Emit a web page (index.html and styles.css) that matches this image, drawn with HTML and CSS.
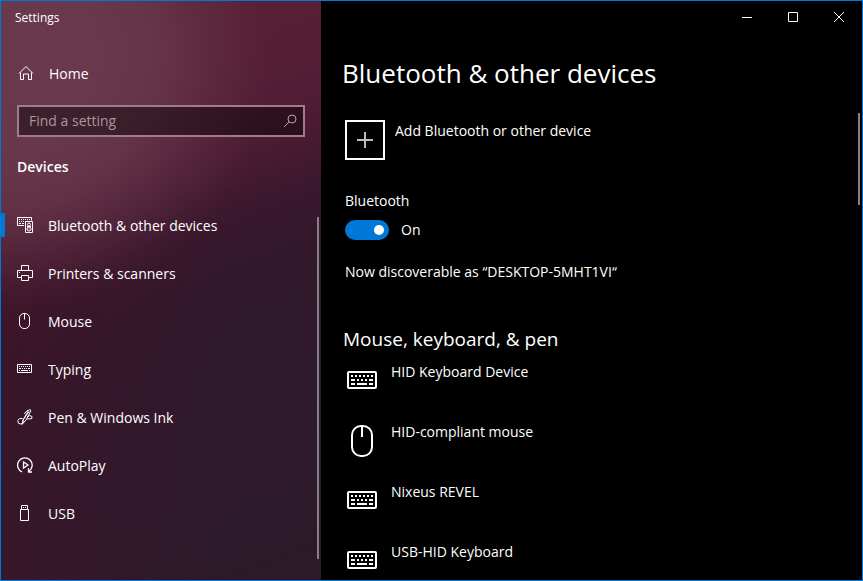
FILE: index.html
```html
<!DOCTYPE html>
<html lang="en">
<head>
<meta charset="utf-8">
<meta name="viewport" content="width=device-width, initial-scale=1">
<title>Settings</title>
<link rel="stylesheet" href="styles.css">
</head>
<body>
<svg class="symbols" aria-hidden="true">
  <symbol id="keyboard" viewBox="0 0 30 18">
    <rect x="1" y="1" width="28" height="16" rx="1" fill="none" stroke="currentColor" stroke-width="2"/>
    <path d="M4 5h2M8 5h2M12 5h2M16 5h2M20 5h2M24 5h2M4 9h4M10 9h2M14 9h2M18 9h2M22 9h4M4 13h4M10 13h10M22 13h4" fill="none" stroke="currentColor" stroke-width="2"/>
  </symbol>
</svg>
<div class="window">
  <aside class="sidebar">
    <div class="caption">Settings</div>
    <a class="home" href="#">
      <svg class="icon" viewBox="0 0 16 16"><path d="M1 8.500 8 1.500l7 7M2.500 7.500v7h3v-5.500h5v5.500h3v-7"/></svg>
      <span>Home</span>
    </a>
    <form class="search">
      <input class="search-input" type="text" placeholder="Find a setting" aria-label="Find a setting">
      <button class="search-button" type="button" aria-label="Search">
        <svg class="icon" viewBox="0 0 16 16"><circle cx="10" cy="6" r="4"/><path d="M7 9 2 14"/></svg>
      </button>
    </form>
    <h2 class="category">Devices</h2>
    <nav class="nav">
      <a class="nav-item selected" href="#">
        <svg class="icon" viewBox="0 0 16 16"><path d="M7 8.500H.500v-8h14v3M2 2.500h1M4 2.500h1M6 2.500h1M8 2.500h1M10 2.500h1M12 2.500h1M2 4.500h1M4 4.500h1M6 4.500h1M2 6.500h2M5 6.500h2M8.500 4.500h7v11h-7z"/><circle cx="12" cy="7.500" r="1.500"/><circle cx="12" cy="12" r="2"/><path d="M10 9.500h4M11.500 12h1"/></svg>
        <span>Bluetooth &amp; other devices</span>
      </a>
      <a class="nav-item" href="#">
        <svg class="icon" viewBox="0 0 16 16"><path d="M4.500 5V.500h7V5M4 12.500H.500v-7h15v7H12M4.500 10.500h7v5h-7zM2 7.500h1"/></svg>
        <span>Printers &amp; scanners</span>
      </a>
      <a class="nav-item" href="#">
        <svg class="icon" viewBox="0 0 16 16"><rect x="2.500" y=".5" width="10" height="15" rx="4.500"/><path d="M7.500 1v5.500"/></svg>
        <span>Mouse</span>
      </a>
      <a class="nav-item" href="#">
        <svg class="icon" viewBox="0 0 16 16"><path d="M.5 3.500h14v8H.500zM2 5.500h1M4 5.500h1M6 5.500h1M8 5.500h1M10 5.500h1M12 5.500h1M2 7.500h2M5 7.500h1M7 7.500h1M9 7.500h1M11 7.500h2M2 9.500h1M4 9.500h7M12 9.500h1"/></svg>
        <span>Typing</span>
      </a>
      <a class="nav-item" href="#">
        <svg class="icon" viewBox="0 0 16 16"><path d="M5 15.500 6 11 11.500 1.500q1.500-2 2.500 0L9 11zM6 11 12 2.500M11 .800 7 5M5.500 9.500Q2 8.500.800 11.500q-.5 3.500 3 3.500 2.500-.5 2.700-3.500M10 8.500q3-3.500 5-1 .8 2.500-2 2.500-2-.5-3 0"/></svg>
        <span>Pen &amp; Windows Ink</span>
      </a>
      <a class="nav-item" href="#">
        <svg class="icon icon-strong" viewBox="0 0 16 16"><path d="M5 14.900A7.300 7.300 0 1 1 12 14.200M11.500 11v4H15M6.500 5v6l4.500-3z"/></svg>
        <span>AutoPlay</span>
      </a>
      <a class="nav-item" href="#">
        <svg class="icon" viewBox="0 0 16 16"><path d="M3.500 4.500h8v11h-8zM4.500 4V.500h6V4M6 2.500h1M8 2.500h1"/></svg>
        <span>USB</span>
      </a>
    </nav>
    <div class="scrollbar"></div>
  </aside>
  <main class="content">
    <div class="window-controls">
      <button type="button" aria-label="Minimize"><svg viewBox="0 0 10 10"><path d="M0 5.500h10"/></svg></button>
      <button type="button" aria-label="Maximize"><svg viewBox="0 0 10 10"><path d="M.5.500h9v9h-9z"/></svg></button>
      <button type="button" aria-label="Close"><svg viewBox="0 0 10 10"><path d="M0 0 10 10M10 0 0 10"/></svg></button>
    </div>
    <div class="page">
      <h1>Bluetooth &amp; other devices</h1>
      <button class="add" type="button">
        <span class="add-box"><svg viewBox="0 0 16 16"><path d="M0 8h16M8 0v16"/></svg></span>
        <span>Add Bluetooth or other device</span>
      </button>
      <section class="bluetooth">
        <label for="bluetooth-switch">Bluetooth</label>
        <div class="switch-row">
          <input class="switch" id="bluetooth-switch" type="checkbox" role="switch" checked>
          <span>On</span>
        </div>
        <p>Now discoverable as “DESKTOP-5MHT1VI“</p>
      </section>
      <section>
        <h2>Mouse, keyboard, &amp; pen</h2>
        <ul class="devices">
          <li><svg class="keyboard"><use href="#keyboard"/></svg><span>HID Keyboard Device</span></li>
          <li><svg class="mouse" viewBox="0 0 22 32"><rect x="1" y="1" width="20" height="30" rx="9"/><path d="M11 2v10"/></svg><span>HID-compliant mouse</span></li>
          <li><svg class="keyboard"><use href="#keyboard"/></svg><span>Nixeus REVEL</span></li>
          <li><svg class="keyboard"><use href="#keyboard"/></svg><span>USB-HID Keyboard</span></li>
        </ul>
      </section>
    </div>
    <div class="scrollbar"></div>
  </main>
</div>
</body>
</html>
```
FILE: styles.css
```css
* {
  box-sizing: border-box;
}

body {
  margin: 0;
  background: #000;
  color: #fff;
  font-family: "Open Sans", "Noto Sans", sans-serif;
  font-size: 14px;
  line-height: 20px;
}

h1, h2, p, ul {
  margin: 0;
  padding: 0;
}

a {
  color: inherit;
  text-decoration: none;
}

button {
  padding: 0;
  border: 0;
  background: none;
  color: inherit;
  font: inherit;
}

svg {
  fill: none;
  stroke: currentColor;
}

.symbols {
  position: absolute;
  width: 0;
  height: 0;
}

.window {
  display: grid;
  grid-template-columns: 320px 1fr;
  height: 100vh;
  border: 1px solid #0078d7;
  overflow: hidden;
}

.sidebar {
  position: relative;
  background:
    radial-gradient(ellipse 84% 43% at 0% 11%, rgba(122, 80, 98, 0.56) 0%, rgba(122, 80, 98, 0.54) 35%, rgba(122, 80, 98, 0.44) 58%, rgba(122, 80, 98, 0.2) 78%, rgba(122, 80, 98, 0.06) 92%, rgba(122, 80, 98, 0) 100%),
    linear-gradient(90deg, rgba(74, 16, 36, 0.35), rgba(74, 16, 36, 0) 70%),
    linear-gradient(160deg, #5a2239 0%, #571f36 20%, #521d35 29%, #481b32 36%, #3a182d 43%, #30182a 54%, #2e192c 75%, #2b1a28 100%);
}

.icon {
  flex: none;
  width: 16px;
  height: 16px;
}

.icon-strong {
  stroke-width: 1.3;
}

.caption {
  height: 34px;
  padding-left: 14px;
  font-size: 12px;
  line-height: 34px;
}

.home {
  display: flex;
  align-items: center;
  gap: 15px;
  height: 48px;
  margin-top: 14px;
  padding-left: 17px;
}

.home span,
.nav-item span {
  padding-top: 2px;
}

.search {
  display: flex;
  align-items: center;
  height: 32px;
  margin: 8px 16px 0;
  border: 2px solid #9f7c8a;
  background: rgba(0, 0, 0, 0.42);
}

.search-input {
  flex: 1;
  min-width: 0;
  height: 28px;
  padding: 0 10px 2px;
  border: 0;
  outline: 0;
  background: none;
  color: #fff;
  font: inherit;
}

.search-input::placeholder {
  color: #a9969e;
  opacity: 1;
}

.search-button {
  display: flex;
  padding: 0 5px;
  color: #b7a4ab;
}

.category {
  margin: 20px 16px 24px;
  font-size: 14px;
  font-weight: 600;
}

.nav-item {
  position: relative;
  display: flex;
  align-items: center;
  gap: 15px;
  height: 48px;
  padding-left: 16px;
}

.selected::before {
  content: "";
  position: absolute;
  left: 0;
  width: 4px;
  height: 24px;
  background: #0078d7;
}

.scrollbar {
  position: absolute;
  width: 2px;
  background: #858085;
}

.sidebar .scrollbar {
  top: 216px;
  right: 2px;
  bottom: 21px;
}

.content {
  position: relative;
  min-width: 0;
  min-height: 0;
}

.content .scrollbar {
  top: 112px;
  right: 2px;
  height: 92px;
}

.window-controls {
  display: flex;
  justify-content: flex-end;
}

.window-controls button {
  display: grid;
  place-items: center;
  width: 46px;
  height: 32px;
}

.window-controls svg {
  width: 10px;
  height: 10px;
}

.page {
  padding: 20px 24px 0;
}

h1 {
  margin-left: -3px;
  font-size: 26px;
  font-weight: 400;
  line-height: 40px;
}

.add {
  display: flex;
  align-items: flex-start;
  gap: 10px;
  margin-top: 27px;
  line-height: 22px;
}

.add-box {
  display: grid;
  place-items: center;
  width: 40px;
  height: 40px;
  border: 2px solid #fff;
}

.add-box svg {
  width: 16px;
  height: 16px;
  stroke: #bbb;
  stroke-width: 2;
}

.bluetooth {
  margin: 31px 0 47px;
}

.bluetooth label {
  display: block;
}

.switch-row {
  display: flex;
  align-items: center;
  gap: 12px;
  margin: 9px 0 22px;
}

.switch {
  appearance: none;
  display: flex;
  align-items: center;
  justify-content: flex-end;
  width: 44px;
  height: 20px;
  margin: 0;
  padding-right: 5px;
  border-radius: 10px;
  background: #0078d7;
}

.switch::before {
  content: "";
  width: 10px;
  height: 10px;
  border-radius: 50%;
  background: #fff;
}

.content h2 {
  margin-left: -2px;
  font-size: 19px;
  font-weight: 400;
  line-height: 20px;
}

.devices {
  margin-top: 13px;
  list-style: none;
}

.devices li {
  display: grid;
  grid-template-columns: 34px 1fr;
  column-gap: 12px;
  height: 60px;
}

.devices svg {
  justify-self: center;
}

.keyboard {
  width: 30px;
  height: 18px;
  margin-top: 9px;
}

.mouse {
  width: 22px;
  height: 32px;
  margin-top: 3px;
  stroke-width: 2;
}
```
